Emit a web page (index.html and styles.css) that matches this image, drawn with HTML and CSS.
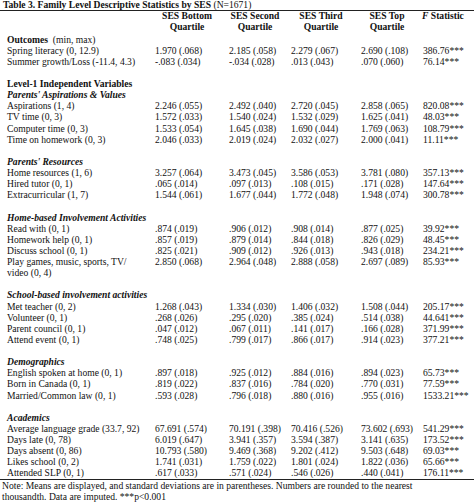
FILE: index.html
```html
<!DOCTYPE html>
<html>
<head>
<meta charset="utf-8">
<link rel="stylesheet" href="styles.css">
</head>
<body>
<div class="title"><b>Table 3. Family Level Descriptive Statistics by SES</b> (N=1671)</div>
<div class="stats">
  <div class="row head">
    <div></div>
    <div class="hc">SES Bottom<br>Quartile</div>
    <div class="hc">SES Second<br>Quartile</div>
    <div class="hc">SES Third<br>Quartile</div>
    <div class="hc">SES Top<br>Quartile</div>
    <div class="hf"><i>F</i> Statistic</div>
  </div>
  <div class="body">
    <div class="row"><div class="lbl"><b>Outcomes</b>&nbsp; (min, max)</div></div>
    <div class="row"><div class="lbl">Spring literacy (0, 12.9)</div><div>1.970 (.068)</div><div>2.185 (.058)</div><div>2.279 (.067)</div><div>2.690 (.108)</div><div>386.76***</div></div>
    <div class="row"><div class="lbl">Summer growth/Loss (-11.4, 4.3)</div><div>-.083 (.034)</div><div>-.034 (.028)</div><div>.013 (.043)</div><div>.070 (.060)</div><div>76.14***</div></div>
    <div class="blank"></div>
    <div class="row"><div class="lbl sec"><b>Level-1 Independent Variables</b></div></div>
    <div class="row"><div class="lbl sec"><b><i>Parents' Aspirations &amp; Values</i></b></div></div>
    <div class="row"><div class="lbl">Aspirations (1, 4)</div><div>2.246 (.055)</div><div>2.492 (.040)</div><div>2.720 (.045)</div><div>2.858 (.065)</div><div>820.08***</div></div>
    <div class="row"><div class="lbl">TV time (0, 3)</div><div>1.572 (.033)</div><div>1.540 (.024)</div><div>1.532 (.029)</div><div>1.625 (.041)</div><div>48.03***</div></div>
    <div class="row"><div class="lbl">Computer time (0, 3)</div><div>1.533 (.054)</div><div>1.645 (.038)</div><div>1.690 (.044)</div><div>1.769 (.063)</div><div>108.79***</div></div>
    <div class="row"><div class="lbl">Time on homework (0, 3)</div><div>2.046 (.033)</div><div>2.019 (.024)</div><div>2.032 (.027)</div><div>2.000 (.041)</div><div>11.11***</div></div>
    <div class="blank"></div>
    <div class="row"><div class="lbl sec"><b><i>Parents' Resources</i></b></div></div>
    <div class="row"><div class="lbl">Home resources (1, 6)</div><div>3.257 (.064)</div><div>3.473 (.045)</div><div>3.586 (.053)</div><div>3.781 (.080)</div><div>357.13***</div></div>
    <div class="row"><div class="lbl">Hired tutor (0, 1)</div><div>.065 (.014)</div><div>.097 (.013)</div><div>.108 (.015)</div><div>.171 (.028)</div><div>147.64***</div></div>
    <div class="row"><div class="lbl">Extracurricular (1, 7)</div><div>1.544 (.061)</div><div>1.677 (.044)</div><div>1.772 (.048)</div><div>1.948 (.074)</div><div>300.78***</div></div>
    <div class="blank"></div>
    <div class="row"><div class="lbl sec"><b><i>Home-based Involvement Activities</i></b></div></div>
    <div class="row"><div class="lbl">Read with (0, 1)</div><div>.874 (.019)</div><div>.906 (.012)</div><div>.908 (.014)</div><div>.877 (.025)</div><div>39.92***</div></div>
    <div class="row"><div class="lbl">Homework help (0, 1)</div><div>.857 (.019)</div><div>.879 (.014)</div><div>.844 (.018)</div><div>.826 (.029)</div><div>48.45***</div></div>
    <div class="row"><div class="lbl">Discuss school (0, 1)</div><div>.825 (.021)</div><div>.909 (.012)</div><div>.926 (.013)</div><div>.943 (.018)</div><div>234.21***</div></div>
    <div class="row"><div class="lbl">Play games, music, sports, TV/<br>video (0, 4)</div><div>2.850 (.068)</div><div>2.964 (.048)</div><div>2.888 (.058)</div><div>2.697 (.089)</div><div>85.93***</div></div>
    <div class="blank"></div>
    <div class="row"><div class="lbl sec"><b><i>School-based involvement activities</i></b></div></div>
    <div class="row"><div class="lbl">Met teacher (0, 2)</div><div>1.268 (.043)</div><div>1.334 (.030)</div><div>1.406 (.032)</div><div>1.508 (.044)</div><div>205.17***</div></div>
    <div class="row"><div class="lbl">Volunteer (0, 1)</div><div>.268 (.026)</div><div>.295 (.020)</div><div>.385 (.024)</div><div>.514 (.038)</div><div>44.641***</div></div>
    <div class="row"><div class="lbl">Parent council (0, 1)</div><div>.047 (.012)</div><div>.067 (.011)</div><div>.141 (.017)</div><div>.166 (.028)</div><div>371.99***</div></div>
    <div class="row"><div class="lbl">Attend event (0, 1)</div><div>.748 (.025)</div><div>.799 (.017)</div><div>.866 (.017)</div><div>.914 (.023)</div><div>377.21***</div></div>
    <div class="blank"></div>
    <div class="row"><div class="lbl sec"><b><i>Demographics</i></b></div></div>
    <div class="row"><div class="lbl">English spoken at home (0, 1)</div><div>.897 (.018)</div><div>.925 (.012)</div><div>.884 (.016)</div><div>.894 (.023)</div><div>65.73***</div></div>
    <div class="row"><div class="lbl">Born in Canada (0, 1)</div><div>.819 (.022)</div><div>.837 (.016)</div><div>.784 (.020)</div><div>.770 (.031)</div><div>77.59***</div></div>
    <div class="row"><div class="lbl">Married/Common law (0, 1)</div><div>.593 (.028)</div><div>.796 (.018)</div><div>.880 (.016)</div><div>.955 (.016)</div><div>1533.21***</div></div>
    <div class="blank"></div>
    <div class="row"><div class="lbl sec"><b><i>Academics</i></b></div></div>
    <div class="row"><div class="lbl">Average language grade (33.7, 92)</div><div>67.691 (.574)</div><div>70.191 (.398)</div><div>70.416 (.526)</div><div>73.602 (.693)</div><div>541.29***</div></div>
    <div class="row"><div class="lbl">Days late (0, 78)</div><div>6.019 (.647)</div><div>3.941 (.357)</div><div>3.594 (.387)</div><div>3.141 (.635)</div><div>173.52***</div></div>
    <div class="row"><div class="lbl">Days absent (0, 86)</div><div>10.793 (.580)</div><div>9.469 (.368)</div><div>9.202 (.412)</div><div>9.503 (.648)</div><div>69.03***</div></div>
    <div class="row"><div class="lbl">Likes school (0, 2)</div><div>1.741 (.031)</div><div>1.759 (.022)</div><div>1.801 (.024)</div><div>1.822 (.036)</div><div>65.66***</div></div>
    <div class="row"><div class="lbl">Attended SLP (0, 1)</div><div>.617 (.033)</div><div>.571 (.024)</div><div>.546 (.026)</div><div>.440 (.041)</div><div>176.11***</div></div>
  </div>
</div>
<div class="note">Note: Means are displayed, and standard deviations are in parentheses. Numbers are rounded to the nearest thousandth. Data are imputed. ***p&lt;0.001</div>
</body>
</html>
```
FILE: styles.css
```css
html, body {
  margin: 0;
  padding: 0;
  background: #ffffff;
}
body {
  width: 474px;
  height: 502px;
  overflow: hidden;
  font-family: "Liberation Serif", "Times New Roman", serif;
  font-size: 9.6px;
  color: #111;
}
.title {
  line-height: 10px;
  padding-left: 3px;
  white-space: nowrap;
}
.stats {
  border-top: 1px solid #222;
  border-bottom: 1px solid #222;
}
.row {
  display: grid;
  grid-template-columns: 150px 74px 62px 70px 62px 56px;
  line-height: 11.13px;
  white-space: nowrap;
}
.row > div {
  padding-left: 5px;
}
.row > .lbl {
  padding-left: 7px;
}
.row > .sec {
  grid-column: 1 / -1;
}
.head {
  font-weight: bold;
  line-height: 10.8px;
  height: 22.5px;
}
.head > .hc {
  text-align: center;
  padding-left: 0;
}
.head > .hf {
  padding-left: 4px;
}
.blank {
  height: 11.13px;
}
.note {
  line-height: 11px;
  padding-left: 2px;
  width: 440px;
}
```
